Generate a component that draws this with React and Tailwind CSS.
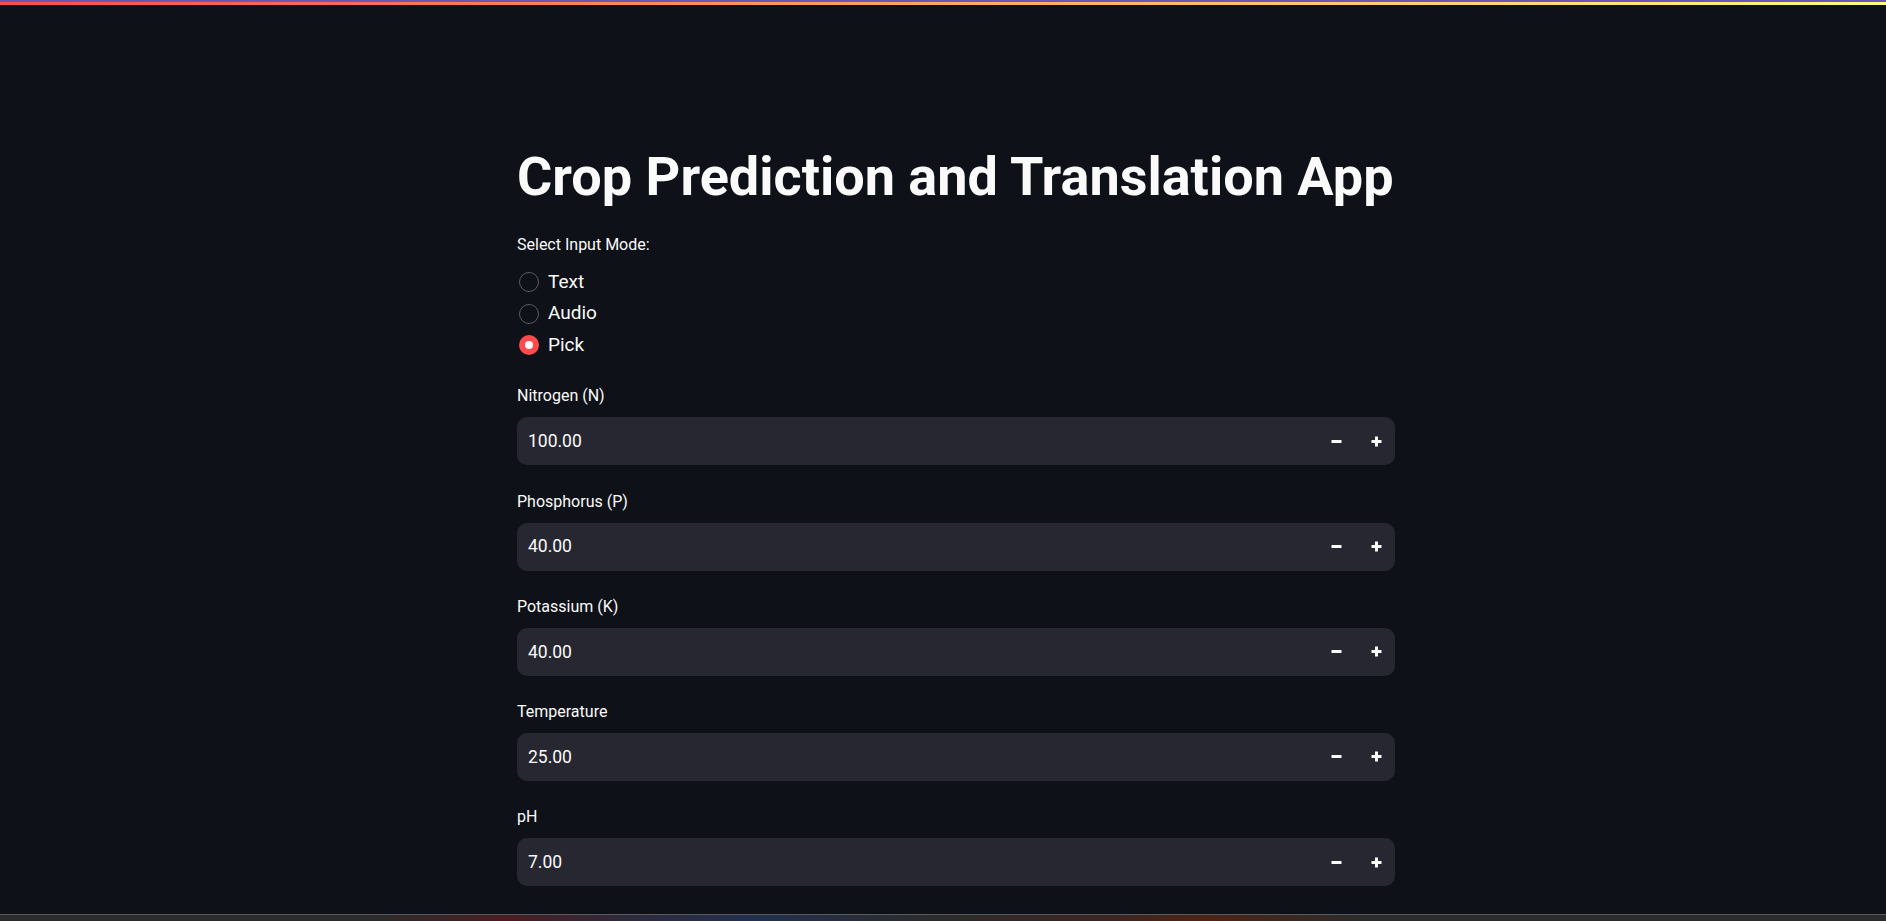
import React from "react";

const FONT = { fontFamily: "Roboto, 'Noto Sans', Arial, sans-serif" };

function Minus() {
  return (
    <svg width="11" height="11" viewBox="0 0 11 11">
      <rect x="0.5" y="4" width="10" height="3" fill="#fafafa" />
    </svg>
  );
}

function Plus() {
  return (
    <svg width="11" height="11" viewBox="0 0 11 11">
      <rect x="0.5" y="4" width="10" height="3" fill="#fafafa" />
      <rect x="4" y="0.5" width="3" height="10" fill="#fafafa" />
    </svg>
  );
}

function NumberField({ label, value }) {
  return (
    <div className="flex flex-col">
      <div className="h-[30px] flex items-center text-[16px] text-[#fafafa]">{label}</div>
      <div className="mt-[6px] h-[48px] rounded-[10px] bg-[#262730] flex items-center">
        <div className="flex-1 pl-[11px] text-[17.5px] text-[#fafafa]">{value}</div>
        <div className="w-[40px] h-full flex items-center justify-center">
          <Minus />
        </div>
        <div className="w-[40px] h-full flex items-center justify-center mr-[-1px]">
          <Plus />
        </div>
      </div>
    </div>
  );
}

function Radio({ label, checked }) {
  return (
    <div className="h-[31.8px] flex items-center">
      <div className="w-[2px]" />
      {checked ? (
        <div className="w-[20px] h-[20px] rounded-full bg-[#ff4b4b] flex items-center justify-center">
          <div className="w-[8px] h-[8px] rounded-full bg-[#fafafa]" />
        </div>
      ) : (
        <div className="w-[20px] h-[20px] rounded-full border border-[#5a5c63]" />
      )}
      <div className="ml-[9px] text-[19px] text-[#fafafa]">{label}</div>
    </div>
  );
}

export default function App() {
  const fields = [
    ["Nitrogen (N)", "100.00"],
    ["Phosphorus (P)", "40.00"],
    ["Potassium (K)", "40.00"],
    ["Temperature", "25.00"],
    ["pH", "7.00"],
    ["Humidity", "80.00"],
  ];
  return (
    <div className="h-[921px] w-full flex flex-col bg-[#0e1117] overflow-hidden" style={FONT}>
      <div className="h-[2px] bg-[#6c55b5]" />
      <div className="h-[3px] bg-[linear-gradient(90deg,#ff4b4b,#fffd80)]" />
      <div className="flex-1 overflow-hidden flex justify-center pl-[26px]">
        <div className="w-[878px] flex flex-col pt-[139px]">
          <h1 className="text-[54px] leading-[66px] font-bold text-[#fafafa] tracking-[0px]">
            Crop Prediction and Translation App
          </h1>
          <div className="mt-[23px] h-[30px] flex items-center text-[16px] text-[#fafafa]">
            Select Input Mode:
          </div>
          <div className="mt-[9px] flex flex-col">
            <Radio label="Text" />
            <Radio label="Audio" />
            <Radio label="Pick" checked />
          </div>
          <div className="mt-[20px] flex flex-col gap-[21.2px]">
            {fields.map(([l, v]) => (
              <NumberField key={l} label={l} value={v} />
            ))}
          </div>
        </div>
      </div>
      <div className="h-[1px] bg-[#5a5a5a]" />
      <div className="h-[6px] bg-[linear-gradient(90deg,#2b2b2b_0%,#2b2b2b_20%,#4a1c22_27%,#2e2a3c_33%,#22304e_40%,#2b2b2b_50%,#3a2424_58%,#4d2414_64%,#2b2b2b_72%,#2b2b2b_100%)]" />
    </div>
  );
}
